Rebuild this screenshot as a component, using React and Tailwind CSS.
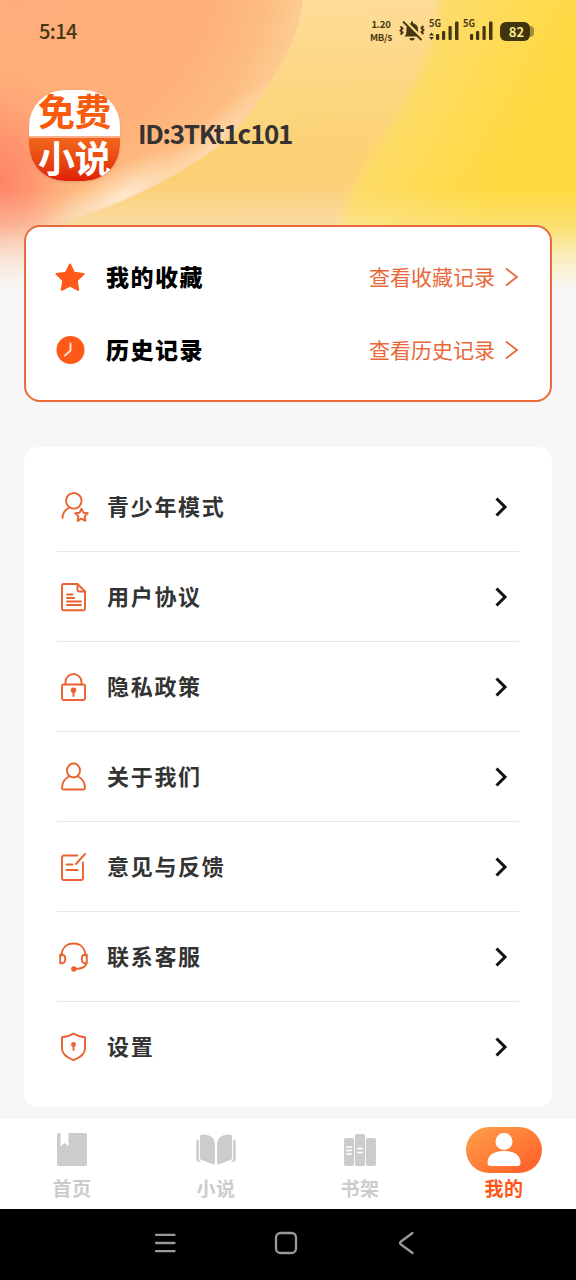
const menuItems = [
  { label: '青少年模式', icon: 'teen' },
  { label: '用户协议', icon: 'document' },
  { label: '隐私政策', icon: 'lock' },
  { label: '关于我们', icon: 'person' },
  { label: '意见与反馈', icon: 'feedback' },
  { label: '联系客服', icon: 'headset' },
  { label: '设置', icon: 'shield' }
]

const tabs = [
  { label: '首页', icon: 'home' },
  { label: '小说', icon: 'book' },
  { label: '书架', icon: 'shelf' },
  { label: '我的', icon: 'mine' }
]

const menuPaths = {
  teen: (
    <>
      <circle cx="14.800" cy="8.800" r="7.800" />
      <path d="M10.500 15.500C6 17.500 3.700 21.500 3.500 26" />
      <path d="M22.500 16.700l1.900 4 4.300.6-3.100 3.100.7 4.400-3.800-2.100-3.900 2.100.8-4.400-3.200-3.100 4.400-.6z" />
    </>
  ),
  document: (
    <>
      <path d="M18.500 2H4.500A1.500 1.500 0 0 0 3 3.500v23.300a1.500 1.500 0 0 0 1.500 1.500h20a1.500 1.500 0 0 0 1.500-1.500V9.500L18.500 2z" />
      <path d="M18.500 2.500V8a1.500 1.500 0 0 0 1.500 1.500h6M8 12.500h5.500M8 16h7M8 19.500h14M8 23h14" />
    </>
  ),
  lock: (
    <>
      <rect x="3" y="12.500" width="23" height="15.500" rx="1.500" />
      <path d="M6.500 12.500V10a8 8 0 0 1 16 0v2.500M14.500 19v5" />
      <circle cx="14.500" cy="18.300" r="1.800" fill="#e9622f" />
    </>
  ),
  person: (
    <>
      <ellipse cx="14.500" cy="8.500" rx="6.500" ry="7" />
      <path d="M10 14.500C5.500 16.800 3.200 20.600 3 26c0 1 .5 1.500 1.500 1.500h20c1 0 1.500-.5 1.500-1.500-.2-5.400-2.500-9.200-7-11.500" />
    </>
  ),
  feedback: (
    <path d="M18.500 3.500H5a2 2 0 0 0-2 2V26a2 2 0 0 0 2 2h17a2 2 0 0 0 2-2V10.500M26 2l-9 10M7.500 12.500h6M7.500 18h11" />
  ),
  headset: (
    <>
      <path d="M2.500 13.500C3 6 7.500 1.500 14.500 1.500S26 6 26.500 13.500" />
      <path d="M1.200 12.800h2c2 0 3 1.500 3 4s-1 4.500-3 4.500h-2zM27.800 12.800h-2c-2 0-3 1.500-3 4s1 4.500 3 4.500h2zM27.300 21.500c-.5 3.500-4 5.200-11 5.500" />
      <circle cx="14.800" cy="27" r="1.700" fill="#e9622f" />
    </>
  ),
  shield: (
    <>
      <path d="M14.500 1.500c3.500 2.400 7.500 3.500 11.500 3.700v11.500c0 5.200-4.700 8.700-11.500 11.500C7.700 25.400 3 21.900 3 16.700V5.200c4-.2 8-1.300 11.500-3.700z" />
      <path d="M14.500 13.500v4.500" />
      <circle cx="14.500" cy="12.500" r="1.500" fill="#e9622f" />
    </>
  )
}

function MenuIcon({ name }) {
  return (
    <svg
      className="h-[30px] w-[30px] shrink-0"
      viewBox="0 0 30 30"
      fill="none"
      stroke="#e9622f"
      strokeWidth="1.9"
      strokeLinecap="round"
      strokeLinejoin="round"
    >
      {menuPaths[name]}
    </svg>
  )
}

function HeaderArt() {
  return (
    <svg className="absolute top-0 left-0 -z-10 h-[300px] w-full" viewBox="0 0 576 300" preserveAspectRatio="none">
      <defs>
        <linearGradient id="base" gradientUnits="userSpaceOnUse" x1="380" x2="540" y1="20" y2="110">
          <stop offset="0" stopColor="#fddb7c" />
          <stop offset="0.5" stopColor="#fedb5c" />
          <stop offset="1" stopColor="#fed940" />
        </linearGradient>
        <radialGradient id="orb" gradientUnits="userSpaceOnUse" cx="10" cy="-50" r="295">
          <stop offset="0" stopColor="#ffac7c" />
          <stop offset="0.7" stopColor="#ffb078" />
          <stop offset="0.88" stopColor="#fdbc80" />
          <stop offset="1" stopColor="#fdcb91" />
        </radialGradient>
        <linearGradient id="band" x1="0.5" x2="0.55" y1="0" y2="1">
          <stop offset="0" stopColor="#fede9e" />
          <stop offset="0.35" stopColor="#fdd680" />
          <stop offset="0.55" stopColor="#fcd074" />
          <stop offset="0.8" stopColor="#fbd28f" />
        </linearGradient>
        <radialGradient id="pink">
          <stop offset="0" stopColor="#ff8369" />
          <stop offset="0.4" stopColor="#ff8b6c" stopOpacity="0.75" />
          <stop offset="1" stopColor="#ffa078" stopOpacity="0" />
        </radialGradient>
        <radialGradient id="glow">
          <stop offset="0" stopColor="#ffead0" stopOpacity="0.95" />
          <stop offset="1" stopColor="#ffe3bd" stopOpacity="0" />
        </radialGradient>
        <linearGradient id="fade" x1="0" x2="0" y1="0" y2="1">
          <stop offset="0.63" stopColor="#f7f7f7" stopOpacity="0" />
          <stop offset="0.75" stopColor="#f7f7f7" stopOpacity="0.25" />
          <stop offset="0.86" stopColor="#f7f7f7" stopOpacity="0.7" />
          <stop offset="0.97" stopColor="#f7f7f7" />
        </linearGradient>
        <clipPath id="orbClip">
          <path d="M0 0H303C300 34 283 65 257 103S205 158 165 180S90 215 50 225H0z" />
        </clipPath>
        <filter id="soft">
          <feGaussianBlur stdDeviation="4" />
        </filter>
      </defs>
      <rect width="576" height="300" fill="url(#base)" />
      <path d="M-20-20H443C437 45 417 90 388 130S338 200 322 320H-20z" fill="url(#band)" filter="url(#soft)" />
      <path d="M0 0H303C300 34 283 65 257 103S205 158 165 180S90 215 50 225L0 300z" fill="url(#orb)" />
      <ellipse cx="0" cy="182" rx="80" ry="115" fill="url(#pink)" />
      <g clipPath="url(#orbClip)">
        <ellipse cx="125" cy="195" rx="100" ry="30" fill="url(#glow)" transform="rotate(-27 125 195)" />
        <ellipse cx="215" cy="145" rx="100" ry="24" fill="url(#glow)" opacity="0.55" transform="rotate(-45 215 145)" />
      </g>
      <rect width="576" height="300" fill="url(#fade)" />
    </svg>
  )
}

function Signal({ dual }) {
  return (
    <svg className="h-[26px] w-[31px]" viewBox="0 0 31 26" fill="#443713">
      <text x="0" y="9" fontSize="10" fontWeight="700" textLength="12" lengthAdjust="spacingAndGlyphs">5G</text>
      {dual && <path d="M2.500 14.500L5 17.500H0zM0 19h5l-2.500 3z" />}
      <rect x="7" y="16" width="3.200" height="6" rx="1" />
      <rect x="13" y="13" width="3.200" height="9" rx="1" />
      <rect x="19.500" y="8" width="3.200" height="14" rx="1" />
      <rect x="26" y="3.500" width="3.500" height="18.500" rx="1" />
    </svg>
  )
}

function StatusBar() {
  return (
    <div className="flex h-[62px] items-center justify-between pr-[42px] pl-[39px] text-[#443713]">
      <span className="text-[20px] leading-none font-medium tracking-[-0.600px]">5:14</span>
      <div className="flex items-center">
        <div className="w-[24px] text-center text-[9.500px] leading-[13px] font-bold tracking-[-0.200px]">
          <div>1.20</div>
          <div>MB/s</div>
        </div>
        <svg className="ml-[6px] h-[24px] w-[26px]" viewBox="0 0 26 24">
          <path d="M5.500 17.500c2-2 2-4 2-7.500 0-3 2-5.500 4.500-5.800V2.500h2v1.700c3 .4 5 2.700 5 5.800 0 3.500.3 5.500 2.200 7.500zM10.500 19h5a2.500 2.500 0 0 1-5 0z" fill="#443713" />
          <path d="M5.500 1.500L24 20" stroke="#ffdf83" strokeWidth="2.500" />
          <path d="M4 2.500L22.500 21M1.500 7.500l2 2-2 2 2 2-2 2M24.500 7l-2 2 2 2-2 2 2 2" fill="none" stroke="#443713" strokeWidth="1.900" />
        </svg>
        <div className="ml-[4px] flex gap-[3px]">
          <Signal dual />
          <Signal />
        </div>
        <div className="ml-[6px] flex items-center">
          <div className="flex h-[19px] w-[30px] items-center justify-center rounded-[6px] bg-[#40340f] pl-[3px] text-[13px] leading-none font-bold text-[#ffe98a]">82</div>
          <div className="h-[11px] w-[4px] rounded-r-full bg-[#a58d39]" />
        </div>
      </div>
    </div>
  )
}

function Profile() {
  return (
    <div className="flex items-center px-[29px] pt-[28px]">
      <div className="flex h-[91px] w-[91px] flex-col overflow-hidden rounded-[36px] bg-white text-center text-[37px] font-bold shadow-sm">
        <div className="h-[46px] leading-[41px] tracking-[-0.500px] text-[#f75b0b]">免费</div>
        <div className="h-[45px] border-t-2 border-[#f8b18b] bg-gradient-to-b from-[#f1661c] to-[#df1d05] leading-[38px] tracking-[-0.500px] text-white">小说</div>
      </div>
      <div className="-mt-[5px] ml-[18px] text-[26px] leading-none font-bold tracking-[-1.300px] text-[#343232]">ID:3TKt1c101</div>
    </div>
  )
}

function RecordRow({ icon, title, link }) {
  return (
    <div className="flex h-[73px] items-center">
      {icon}
      <span className="-mt-px ml-[21px] text-[23px] font-black tracking-[1.500px] text-black">{title}</span>
      <span className="ml-auto text-[21px] text-[#e9683a]">{link}</span>
      <svg className="ml-[9px] h-[20px] w-[15px]" viewBox="0 0 15 20" fill="none" stroke="#e9683a" strokeWidth="1.8">
        <path d="M2 1.500l11 8.500-11 8.500" />
      </svg>
    </div>
  )
}

function Records() {
  return (
    <div className="mx-6 mt-[44px] h-[177px] rounded-[16px] border-2 border-[#e96b3d] bg-white pt-[13px] pr-[31px] pl-[29px]">
      <RecordRow
        title="我的收藏"
        link="查看收藏记录"
        icon={
          <svg className="h-[30px] w-[30px]" viewBox="0 0 30 30">
            <path
              d="M15 2.500l4 8.200 9.500 1.300-6.800 6.500 1.500 9.300-8.200-4.300-8.200 4.300 1.500-9.300L1.500 12l9.500-1.300z"
              fill="#ff591a"
              stroke="#ff591a"
              strokeWidth="2"
              strokeLinejoin="round"
            />
          </svg>
        }
      />
      <RecordRow
        title="历史记录"
        link="查看历史记录"
        icon={
          <svg className="h-[30px] w-[30px]" viewBox="0 0 30 30">
            <circle cx="15.500" cy="15" r="14" fill="#ff591a" />
            <path d="M15.500 8.500v7l-5.500 5" fill="none" stroke="#ffe4d8" strokeWidth="1.900" strokeLinecap="round" />
          </svg>
        }
      />
    </div>
  )
}

function Menu() {
  return (
    <div className="mx-6 mt-[45px] h-[660px] rounded-[14px] bg-white px-[33px] pt-[15px]">
      {menuItems.map((item) => (
        <div key={item.label} className="flex h-[90px] items-center border-b border-[#e8e8e8] pr-[10px] pl-[2px] last:border-transparent">
          <MenuIcon name={item.icon} />
          <span className="-mt-[2px] ml-[18px] text-[22px] font-bold tracking-[1.700px] text-[#333]">{item.label}</span>
          <svg className="ml-auto h-[20px] w-[15px]" viewBox="0 0 15 20" fill="none" stroke="#111" strokeWidth="3">
            <path d="M2.500 1.500L11 10l-8.500 8.500" />
          </svg>
        </div>
      ))}
    </div>
  )
}

function TabIcon({ name }) {
  if (name === 'mine') {
    return (
      <div className="flex h-[46px] w-[76px] items-center justify-center rounded-full bg-gradient-to-br from-[#ff9f4a] to-[#ff5826]">
        <svg className="h-[36px] w-[36px]" viewBox="0 0 36 36" fill="#fff">
          <circle cx="18" cy="9.500" r="8.500" />
          <path d="M1.500 31c0-8 6-12 16.500-12s16.500 4 16.500 12c0 2-1 3-3 3h-27c-2 0-3-1-3-3z" />
        </svg>
      </div>
    )
  }

  return (
    <svg className="h-[46px] w-[42px]" viewBox="0 0 42 46" fill="#ccc">
      {name === 'home' && (
        <path d="M7.500 6H9.500v13.500l4-3.500 4 3.500V6h17a1.500 1.500 0 0 1 1.500 1.500v30a1.500 1.500 0 0 1-1.500 1.500h-27A1.500 1.500 0 0 1 6 37.500v-30A1.500 1.500 0 0 1 7.500 6z" />
      )}
      {name === 'book' && (
        <>
          <path d="M5 10c0-1.500 1-2.500 2.500-2.500C14.500 7 20 10.500 20 18v18c0 1.300-.8 1.800-2 1.300L6.500 33c-1-.4-1.500-1-1.500-2zM37 10c0-1.500-1-2.500-2.500-2.500C27.500 7 22 10.500 22 18v18c0 1.300.8 1.800 2 1.300L35.500 33c1-.4 1.500-1 1.500-2z" />
          <path d="M4 12.500v19.500c0 1.200.7 2 2.500 3H4c-1.700 0-2.700-.8-2.700-2.500V14.500c0-1.200.7-2 2.700-2zM38 12.500v19.500c0 1.200-.7 2-2.500 3H38c1.700 0 2.700-.8 2.700-2.500V14.500c0-1.200-.7-2-2.700-2z" />
        </>
      )}
      {name === 'shelf' && (
        <>
          <rect x="5" y="11" width="10.200" height="28" rx="2" />
          <rect x="15.900" y="7" width="10.200" height="32" rx="2" />
          <rect x="26.800" y="11" width="10.200" height="28" rx="2" />
          <path d="M7 20h6M7 23.500h6M7 27h6M18 21.500h6M18 25.500h6" stroke="#fff" strokeWidth="1.300" />
        </>
      )}
    </svg>
  )
}

function TabBar() {
  return (
    <div className="mt-3 grid h-[90px] grid-cols-4 bg-white pt-[8px]">
      {tabs.map((tab) => (
        <div key={tab.label} className="flex flex-col items-center">
          <TabIcon name={tab.icon} />
          <span
            className={`mt-[5px] text-[19px] leading-[20px] font-bold tracking-[0.500px] ${
              tab.icon === 'mine' ? 'text-[#ff5618]' : 'text-[#ccc]'
            }`}
          >
            {tab.label}
          </span>
        </div>
      ))}
    </div>
  )
}

function SystemNav() {
  return (
    <div className="flex h-[71px] items-center justify-between bg-black pr-[158px] pb-[4px] pl-[153px]">
      <svg className="h-6 w-6" viewBox="0 0 24 24" stroke="#999" strokeWidth="2.300" strokeLinecap="round">
        <path d="M3 3.800h18.500M3 12h18.500M3 20.200h18.500" />
      </svg>
      <svg className="h-6 w-6" viewBox="0 0 24 24" fill="none" stroke="#999" strokeWidth="2.300">
        <rect x="2" y="2" width="20" height="20" rx="4.500" />
      </svg>
      <svg className="h-6 w-6" viewBox="0 0 24 24" fill="none" stroke="#999" strokeWidth="2.300" strokeLinecap="round">
        <path d="M18.500 2L7 10.500c-1.300 1-1.300 2 0 3L18.500 22" />
      </svg>
    </div>
  )
}

export default function App() {
  return (
    <div className="relative isolate flex h-[1280px] w-full flex-col overflow-hidden bg-[#f7f7f7] font-['Noto_Sans_CJK_SC',sans-serif]">
      <HeaderArt />
      <StatusBar />
      <Profile />
      <Records />
      <Menu />
      <TabBar />
      <SystemNav />
    </div>
  )
}
